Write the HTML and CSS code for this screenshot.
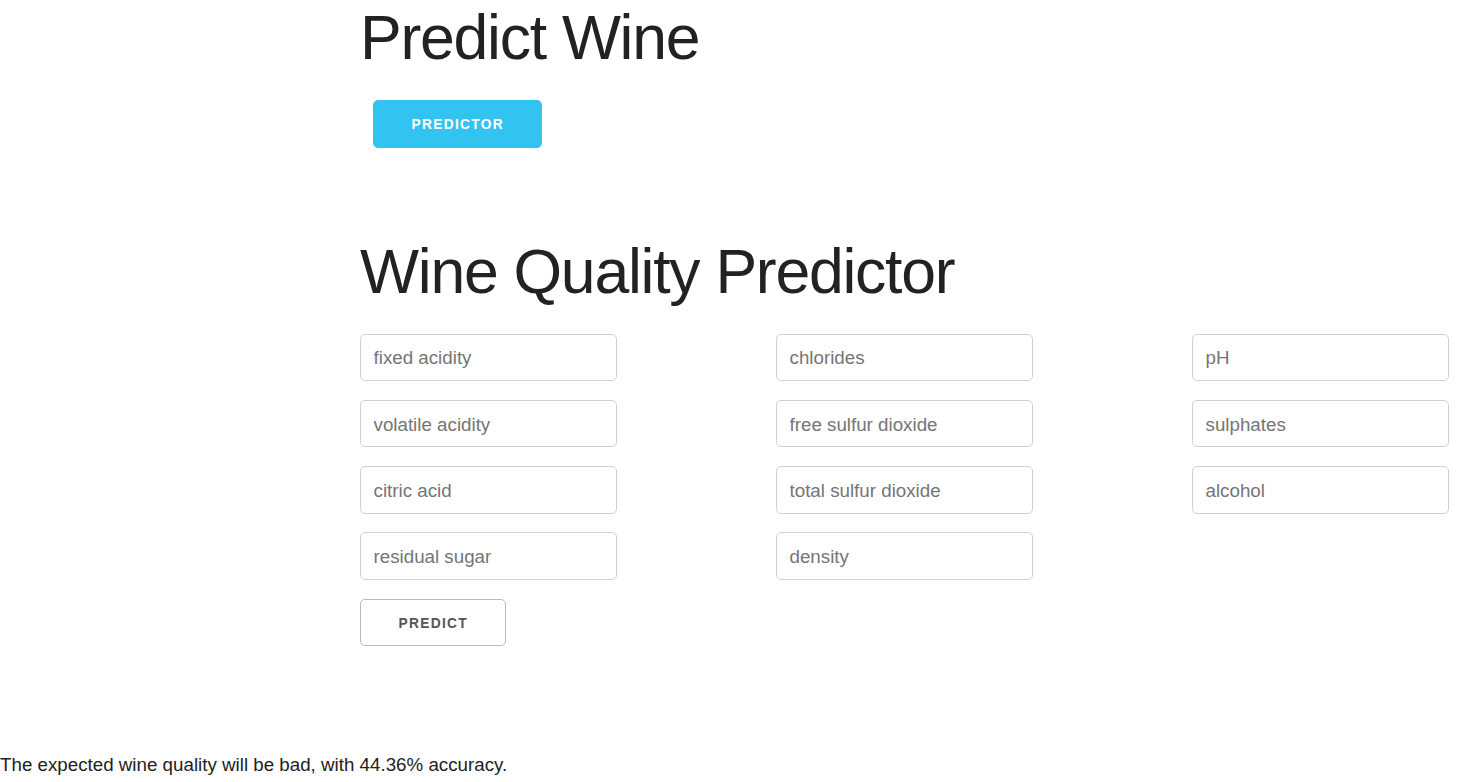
FILE: index.html
```html
<!DOCTYPE html>
<html lang="en">
<head>
<meta charset="utf-8">
<title>Wine Quality Predictor</title>
<link rel="stylesheet" href="styles.css">
</head>
<body>
<div class="container">
  <h1 class="title">Predict Wine</h1>
  <a class="button button-primary nav-btn" href="#">Predictor</a>
  <section class="predictor">
    <h1 class="title">Wine Quality Predictor</h1>
    <form class="form">
      <div class="row">
        <div class="col">
          <input type="text" placeholder="fixed acidity">
          <input type="text" placeholder="volatile acidity">
          <input type="text" placeholder="citric acid">
          <input type="text" placeholder="residual sugar">
        </div>
        <div class="col">
          <input type="text" placeholder="chlorides">
          <input type="text" placeholder="free sulfur dioxide">
          <input type="text" placeholder="total sulfur dioxide">
          <input type="text" placeholder="density">
        </div>
        <div class="col">
          <input type="text" placeholder="pH">
          <input type="text" placeholder="sulphates">
          <input type="text" placeholder="alcohol">
        </div>
      </div>
      <button class="button" type="button">Predict</button>
    </form>
  </section>
</div>
<p class="result">The expected wine quality will be bad, with 44.36% accuracy.</p>
</body>
</html>
```

FILE: styles.css
```css
html {
  background: #fff;
}
body {
  margin: 0;
  font-family: "Liberation Sans", Arial, sans-serif;
  font-size: 18.75px;
  line-height: 1.6;
  color: #222;
}
.container {
  padding-left: 360px;
}
.title {
  margin: 0 0 25px;
  font-size: 62.5px;
  font-weight: 300;
  line-height: 75px;
  letter-spacing: -1.25px;
  color: #222;
}
.button {
  display: inline-block;
  box-sizing: border-box;
  height: 47.5px;
  padding: 0 37.5px;
  color: #555;
  text-align: center;
  font-family: "Liberation Sans", Arial, sans-serif;
  font-size: 13.75px;
  font-weight: 600;
  line-height: 47.5px;
  letter-spacing: 1.3px;
  text-transform: uppercase;
  text-decoration: none;
  white-space: nowrap;
  background: transparent;
  border-radius: 5px;
  border: 1px solid #bbb;
  cursor: pointer;
}
.button-primary {
  color: #fff;
  background: #33c3f0;
  border-color: #33c3f0;
}
.nav-btn {
  margin-left: 13px;
  vertical-align: top;
}
.predictor {
  margin-top: 86px;
}
.form {
  display: flex;
  flex-direction: column;
  align-items: flex-start;
  margin: 0;
}
.row {
  display: grid;
  grid-template-columns: repeat(3, 257px);
  column-gap: 159px;
}
.col {
  display: flex;
  flex-direction: column;
}
.col input {
  box-sizing: border-box;
  width: 257px;
  height: 47.5px;
  padding: 8.5px 12.5px 6.5px;
  margin: 0 0 18.75px;
  background: #fff;
  border: 1px solid #d1d1d1;
  border-radius: 5px;
  font: inherit;
  color: #222;
  outline: none;
}
.col input::placeholder {
  color: #757575;
}
.result {
  margin: 104px 0 0;
  line-height: 30px;
}
```
